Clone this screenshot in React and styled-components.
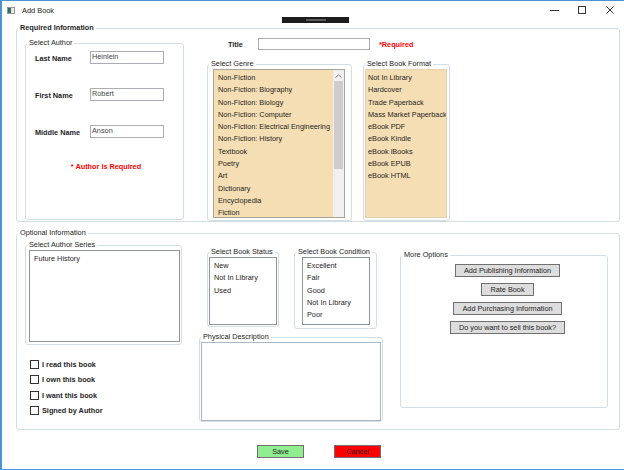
import React from 'react';
import styled, { createGlobalStyle } from 'styled-components';

const genres = [
  'Non-Fiction',
  'Non-Fiction: Biography',
  'Non-Fiction: Biology',
  'Non-Fiction: Computer',
  'Non-Fiction: Electrical Engineering',
  'Non-Fiction: History',
  'Textbook',
  'Poetry',
  'Art',
  'Dictionary',
  'Encyclopedia',
  'Fiction',
];

const formats = [
  'Not In Library',
  'Hardcover',
  'Trade Paperback',
  'Mass Market Paperback',
  'eBook PDF',
  'eBook Kindle',
  'eBook iBooks',
  'eBook EPUB',
  'eBook HTML',
];

const statuses = ['New', 'Not In Library', 'Used'];
const conditions = ['Excellent', 'Fair', 'Good', 'Not In Library', 'Poor'];
const checks = ['I read this book', 'I own this book', 'I want this book', 'Signed by Author'];
const moreOptions = [
  'Add Publishing Information',
  'Rate Book',
  'Add Purchasing Information',
  'Do you want to sell this book?',
];

const GlobalStyle = createGlobalStyle`
  *, *::before, *::after { box-sizing: border-box; }
  html, body { margin: 0; padding: 0; background: #fff; }
  body {
    font-family: "Liberation Sans", Arial, sans-serif;
    font-size: 7.3px;
    color: #1e1e1e;
  }
`;

const App = () => {
  return (
    <>
      <GlobalStyle />
      <Window>
        <TitleBar>
          <AppIcon width="8" height="7" viewBox="0 0 8 7">
            <rect x="0.5" y="0.5" width="7" height="6" fill="#e6e6e6" stroke="#9a9a9a" />
            <rect x="1" y="1" width="3" height="5" fill="#2f6f5e" />
          </AppIcon>
          <WindowTitle>Add Book</WindowTitle>
          <Controls>
            <ControlButton>
              <svg width="9" height="9" viewBox="0 0 9 9">
                <line x1="0" y1="4.5" x2="9" y2="4.5" stroke="#333" />
              </svg>
            </ControlButton>
            <ControlButton>
              <svg width="8" height="8" viewBox="0 0 8 8">
                <rect x="0.5" y="0.5" width="7" height="7" fill="none" stroke="#333" />
              </svg>
            </ControlButton>
            <ControlButton>
              <svg width="8" height="8" viewBox="0 0 8 8">
                <path d="M0.5 0.5L7.5 7.5M7.5 0.5L0.5 7.5" stroke="#333" />
              </svg>
            </ControlButton>
          </Controls>
        </TitleBar>

        <DebugBar>
          <DebugGrip />
        </DebugBar>

        <Content>
          <Group $w={604} $h={199} $pad="5px 0 0 0">
            <Legend $bold>Required Information</Legend>
            <RequiredRow>
              <Group $w={159} $h={182} $pad="3px 0 0 0">
                <Legend>Select Author</Legend>
                <AuthorGrid>
                  <FieldLabel>Last Name</FieldLabel>
                  <TextBox $w={74} $h={13}>Heinlein</TextBox>
                  <FieldLabel>First Name</FieldLabel>
                  <TextBox $w={74} $h={13}>Robert</TextBox>
                  <FieldLabel>Middle Name</FieldLabel>
                  <TextBox $w={74} $h={13}>Anson</TextBox>
                </AuthorGrid>
                <AuthorError>* Author is Required</AuthorError>
              </Group>

              <RightColumn>
                <TitleRow>
                  <TitleLabel>Title</TitleLabel>
                  <TextBox $w={112} $h={12} />
                  <RequiredNote>*Required</RequiredNote>
                </TitleRow>
                <ListGroups>
                  <Group $w={145} $h={162} $pad="0 0 2px 0">
                    <Legend>Select Genre</Legend>
                    <ListBox $h={149} $m="0 6px 0 5px" $bg="#f5deb3" $border="#a9a398">
                      <Items>
                        {genres.map((g) => (
                          <Item key={g}>{g}</Item>
                        ))}
                      </Items>
                      <ScrollBar>
                        <ScrollArrow>
                          <svg width="7" height="4" viewBox="0 0 7 4">
                            <path d="M0.5 3.5L3.5 0.8L6.5 3.5" fill="none" stroke="#777" />
                          </svg>
                        </ScrollArrow>
                        <ScrollThumb />
                      </ScrollBar>
                    </ListBox>
                  </Group>
                  <Group $w={87} $h={162} $pad="0 0 2px 0">
                    <Legend>Select Book Format</Legend>
                    <ListBox $h={149} $m="0 2px 0 1px" $bg="#f5deb3" $border="#e3d2b2">
                      <Items>
                        {formats.map((f) => (
                          <Item key={f} $indent={2}>{f}</Item>
                        ))}
                      </Items>
                    </ListBox>
                  </Group>
                </ListGroups>
              </RightColumn>
            </RequiredRow>
          </Group>

          <Group $w={604} $h={202} $pad="2px 0 0 0" $mt={6}>
            <Legend>Optional Information</Legend>
            <OptionalRow>
              <LeftColumn>
                <Group $w={157} $h={105} $pad="0 0 2px 0">
                  <Legend>Select Author Series</Legend>
                  <ListBox $h={92} $m="0 1px 0 3px" $bg="#fff" $border="#8f939a">
                    <Items>
                      <Item>Future History</Item>
                    </Items>
                  </ListBox>
                </Group>
                <CheckList>
                  {checks.map((c) => (
                    <CheckRow key={c}>
                      <CheckBox />
                      <CheckLabel>{c}</CheckLabel>
                    </CheckRow>
                  ))}
                </CheckList>
              </LeftColumn>

              <MiddleColumn>
                <SmallLists>
                  <Group $w={72} $h={80} $pad="0 0 2px 0">
                    <Legend>Select Book Status</Legend>
                    <ListBox $h={68} $m="0 1px" $bg="#fff" $border="#8f939a">
                      <Items>
                        {statuses.map((s) => (
                          <Item key={s}>{s}</Item>
                        ))}
                      </Items>
                    </ListBox>
                  </Group>
                  <Group $w={83} $h={82} $pad="0 0 4px 0">
                    <Legend>Select Book Condition</Legend>
                    <ListBox $h={68} $m="0 6px 0 7px" $bg="#fff" $border="#8f939a">
                      <Items>
                        {conditions.map((c) => (
                          <Item key={c}>{c}</Item>
                        ))}
                      </Items>
                    </ListBox>
                  </Group>
                </SmallLists>
                <Group $w={184} $h={90} $pad="0" $mt={3}>
                  <Legend>Physical Description</Legend>
                  <TextArea />
                </Group>
              </MiddleColumn>

              <RightOptions>
                <Group $w={208} $h={158} $pad="4px 0 0 0">
                  <Legend>More Options</Legend>
                  <OptionButtons>
                    {moreOptions.map((o) => (
                      <Button key={o}>{o}</Button>
                    ))}
                  </OptionButtons>
                </Group>
              </RightOptions>
            </OptionalRow>
          </Group>

          <Footer>
            <Button $bg="#90ee90" $w={47}>Save</Button>
            <Button $bg="#ff0000" $w={47}>Cancel</Button>
          </Footer>
        </Content>
      </Window>
    </>
  );
};

const Window = styled.div`
  position: relative;
  width: 624px;
  height: 470px;
  border-left: 2px solid #4d94d6;
  border-top: 1px solid #4d94d6;
  border-bottom: 1px solid #4d94d6;
  background: #fff;
  display: flex;
  flex-direction: column;
  overflow: hidden;
`;

const TitleBar = styled.div`
  height: 18px;
  display: flex;
  align-items: center;
  padding-left: 5px;
`;

const AppIcon = styled.svg`
  display: block;
`;

const WindowTitle = styled.span`
  margin-left: 7px;
  font-size: 7.4px;
  color: #222;
`;

const Controls = styled.div`
  margin-left: auto;
  display: flex;
  height: 100%;
`;

const ControlButton = styled.div`
  width: 28px;
  display: flex;
  align-items: center;
  justify-content: center;
  svg { display: block; }
`;

const DebugBar = styled.div`
  position: absolute;
  left: 280px;
  top: 16px;
  width: 67px;
  height: 6px;
  background: #1c1c1c;
  display: flex;
  align-items: center;
  justify-content: center;
`;

const DebugGrip = styled.div`
  width: 20px;
  height: 2px;
  background: #5a5a5a;
`;

const Content = styled.div`
  padding: 4px 0 0 14px;
  display: flex;
  flex-direction: column;
`;

const Group = styled.fieldset`
  margin: ${(p) => p.$mt || 0}px 0 0 0;
  padding: ${(p) => p.$pad || '0'};
  border: 1px solid #d3dde4;
  border-radius: 3px;
  min-width: 0;
  width: ${(p) => p.$w}px;
  height: ${(p) => p.$h}px;
  flex-shrink: 0;
`;

const Legend = styled.legend`
  padding: 0 2px;
  margin-left: 1px;
  font-size: 7.3px;
  line-height: 10px;
  white-space: nowrap;
  font-weight: ${(p) => (p.$bold ? 700 : 400)};
  color: #1e1e1e;
`;

const RequiredRow = styled.div`
  display: flex;
  align-items: flex-start;
  gap: 23px;
  padding-left: 8px;
`;

const AuthorGrid = styled.div`
  display: grid;
  grid-template-columns: 55px 74px;
  row-gap: 24px;
  align-items: center;
  margin-left: 9px;
`;

const FieldLabel = styled.span`
  font-weight: 700;
  padding-top: 2px;
`;

const TextBox = styled.div`
  width: ${(p) => p.$w}px;
  height: ${(p) => p.$h}px;
  border: 1px solid #abadb3;
  background: #fff;
  padding-left: 1px;
  line-height: 10px;
  color: #444;
`;

const AuthorError = styled.div`
  margin-top: 24px;
  padding-left: 3px;
  text-align: center;
  color: #ff0000;
  font-weight: 700;
`;

const RightColumn = styled.div`
  display: flex;
  flex-direction: column;
`;

const TitleRow = styled.div`
  display: flex;
  align-items: center;
  height: 12px;
  padding-left: 21px;
`;

const TitleLabel = styled.span`
  width: 30px;
  font-weight: 700;
`;

const RequiredNote = styled.span`
  margin-left: 9px;
  color: #ff0000;
  font-weight: 700;
`;

const ListGroups = styled.div`
  display: flex;
  gap: 11px;
  margin-top: 9px;
`;

const ListBox = styled.div`
  height: ${(p) => p.$h}px;
  margin: ${(p) => p.$m || 0};
  display: flex;
  background: ${(p) => p.$bg};
  border: 1px solid ${(p) => p.$border};
  overflow: hidden;
`;

const Items = styled.div`
  flex: 1;
  padding-top: 2px;
  overflow: hidden;
`;

const Item = styled.div`
  line-height: 12.3px;
  padding-left: ${(p) => (p.$indent ?? 4)}px;
  white-space: nowrap;
`;

const ScrollBar = styled.div`
  width: 11px;
  background: #f0f0f0;
  display: flex;
  flex-direction: column;
`;

const ScrollArrow = styled.div`
  height: 11px;
  display: flex;
  align-items: center;
  justify-content: center;
  svg { display: block; }
`;

const ScrollThumb = styled.div`
  height: 88px;
  margin: 0 1px;
  background: #cdcdcd;
`;

const OptionalRow = styled.div`
  display: flex;
  align-items: flex-start;
  padding-left: 8px;
`;

const LeftColumn = styled.div`
  display: flex;
  flex-direction: column;
`;

const CheckList = styled.div`
  margin: 12px 0 0 5px;
  display: flex;
  flex-direction: column;
`;

const CheckRow = styled.div`
  height: 15.3px;
  display: flex;
  align-items: center;
`;

const CheckBox = styled.span`
  width: 9px;
  height: 9px;
  border: 1px solid #333;
  background: #fff;
`;

const CheckLabel = styled.span`
  margin-left: 3px;
  font-weight: 700;
`;

const MiddleColumn = styled.div`
  margin: 7px 0 0 17px;
  display: flex;
  flex-direction: column;
`;

const SmallLists = styled.div`
  display: flex;
  align-items: flex-start;
  gap: 15px;
  padding-left: 8px;
`;

const TextArea = styled.div`
  height: 79px;
  margin: 0 1px;
  background: #fff;
  border: 1px solid #a8b8c8;
`;

const RightOptions = styled.div`
  margin: 10px 0 0 17px;
`;

const OptionButtons = styled.div`
  display: flex;
  flex-direction: column;
  align-items: center;
  gap: 6px;
  padding-left: 7px;
`;

const Button = styled.div`
  height: 13px;
  width: ${(p) => (p.$w ? `${p.$w}px` : 'auto')};
  padding: 0 8px;
  background: ${(p) => p.$bg || '#dddddd'};
  border: 1px solid #707070;
  line-height: 11px;
  text-align: center;
  white-space: nowrap;
  color: #1e1e1e;
`;

const Footer = styled.div`
  display: flex;
  gap: 30px;
  margin-top: 15px;
  padding-left: 241px;
`;

export default App;
